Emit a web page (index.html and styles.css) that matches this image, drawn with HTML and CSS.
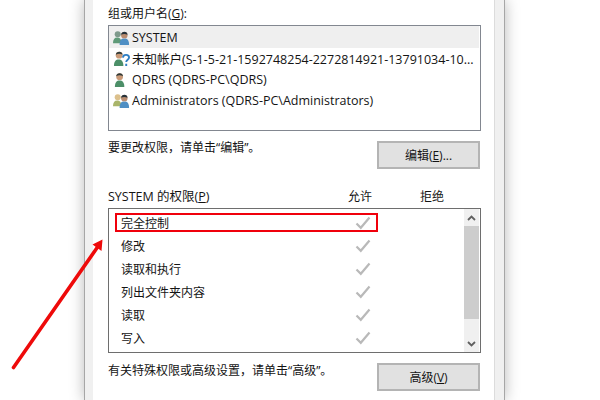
FILE: index.html
```html
<!DOCTYPE html>
<html lang="zh-CN">
<head>
<meta charset="utf-8">
<title>权限</title>
<link rel="stylesheet" href="styles.css">
</head>
<body>
<svg width="0" height="0" class="defs" aria-hidden="true">
  <symbol id="check" viewBox="0 0 16 14"><path d="M1.5 7.5 L5.8 11.8 L14.5 1.5" fill="none" stroke="#b9b9b9" stroke-width="2.2"/></symbol>
  <symbol id="one" viewBox="0 0 18 18">
    <path d="M2 17c0-5 2-7 5-7s5 2 5 7z" fill="#4c8f68"/><circle cx="7" cy="6" r="3.6" fill="#c99a78"/><path d="M3.4 5.6c0-4 7-4.600 7.200 0-2-1.200-5-1.400-7.200 0z" fill="#2f3b3a"/>
  </symbol>
  <symbol id="two" viewBox="0 0 18 18">
    <path d="M0 15c0-4 1.500-6 4.500-6s4.500 2 4.500 6z" fill="var(--back-body)"/><circle cx="5" cy="5.500" r="3.200" fill="var(--back-head)"/>
    <path d="M7 17c0-5 1.500-7 5-7s5 2 5 7z" fill="#4f8fc4"/><circle cx="12" cy="6.500" r="3.400" fill="#b98c70"/><path d="M8.600 6c0-4 6.800-4.400 6.800 0-2-1-4.800-1.200-6.800 0z" fill="#26323a"/>
  </symbol>
  <symbol id="unknown" viewBox="0 0 18 18">
    <path d="M1 17c0-5 2-7 5-7s5 2 5 7z" fill="#4c8f68"/><circle cx="6.500" cy="5.500" r="3.600" fill="#c99a78"/><path d="M3 5c0-4 7-4.600 7.200 0-2-1.200-5-1.400-7.200 0z" fill="#2f3b3a"/>
    <path d="M10.500 8c.5-4 6.500-3.500 6.500 0 0 2.500-3 2.300-3 4.700M14 14.500v2.500" fill="none" stroke="#2f7fc4" stroke-width="2"/>
  </symbol>
  <symbol id="up" viewBox="0 0 9 6"><path d="M1 5 L4.500 1.500 L8 5" fill="none" stroke="#606060" stroke-width="1.800"/></symbol>
  <symbol id="down" viewBox="0 0 9 6"><path d="M1 1 L4.500 4.500 L8 1" fill="none" stroke="#606060" stroke-width="1.800"/></symbol>
</svg>

<main class="window">
  <div class="panel">
    <div class="label first-label">组或用户名(<u>G</u>):</div>
    <ul class="users">
      <li class="user selected"><svg class="icon system"><use href="#two"/></svg><span>SYSTEM</span></li>
      <li class="user"><svg class="icon"><use href="#unknown"/></svg><span class="clip">未知帐户(S-1-5-21-1592748254-2272814921-13791034-10...</span></li>
      <li class="user"><svg class="icon"><use href="#one"/></svg><span>QDRS (QDRS-PC\QDRS)</span></li>
      <li class="user"><svg class="icon admin"><use href="#two"/></svg><span>Administrators (QDRS-PC\Administrators)</span></li>
    </ul>

    <div class="action-row edit-row">
      <span class="label">要更改权限，请单击“编辑”。</span>
      <button class="btn" type="button">编辑(<u>E</u>)...</button>
    </div>

    <div class="perm-head">
      <span class="label grow system-label">SYSTEM 的权限(<u>P</u>)</span>
      <span class="col">允许</span>
      <span class="col">拒绝</span>
      <span class="col-end"></span>
    </div>

    <div class="perms">
      <ul class="perm-rows">
        <li class="perm"><span class="name">完全控制</span><svg class="check"><use href="#check"/></svg><i class="highlight"></i></li>
        <li class="perm"><span class="name">修改</span><svg class="check"><use href="#check"/></svg></li>
        <li class="perm"><span class="name">读取和执行</span><svg class="check"><use href="#check"/></svg></li>
        <li class="perm"><span class="name">列出文件夹内容</span><svg class="check"><use href="#check"/></svg></li>
        <li class="perm"><span class="name">读取</span><svg class="check"><use href="#check"/></svg></li>
        <li class="perm"><span class="name">写入</span><svg class="check"><use href="#check"/></svg></li>
      </ul>
      <div class="scrollbar">
        <div class="sb-btn"><svg class="sb-arrow"><use href="#up"/></svg></div>
        <div class="sb-thumb"></div>
        <div class="sb-rest"></div>
        <div class="sb-btn"><svg class="sb-arrow"><use href="#down"/></svg></div>
      </div>
    </div>

    <div class="action-row adv-row">
      <span class="label">有关特殊权限或高级设置，请单击“高级”。</span>
      <button class="btn" type="button">高级(<u>V</u>)</button>
    </div>
  </div>
</main>

<svg class="arrow" viewBox="0 0 600 400" aria-hidden="true">
  <path d="M13.500 367.500 L99 245" fill="none" stroke="#ee0a0a" stroke-width="3.600" stroke-linecap="round"/>
  <path d="M102.500 239.500 L101.500 251 L92.500 244.500 Z" fill="#ee0a0a"/>
</svg>
</body>
</html>
```

FILE: styles.css
```css
* { box-sizing: border-box; }
html, body { margin: 0; padding: 0; height: 400px; overflow: hidden; background: #fff; }
body {
  font-family: "Open Sans", "Noto Sans CJK SC", sans-serif;
  font-size: 12px;
  color: #141414;
}
ul { list-style: none; margin: 0; padding: 0; }
.defs { position: absolute; }

.window {
  margin-left: 84px;
  width: 421px;
  height: 400px;
  padding: 0 9px 0 8px;
  background: #f0f0f0;
  border-left: 1px solid #a6a6a6;
  border-right: 1px solid #a6a6a6;
  box-shadow: 0 0 14px rgba(0, 0, 0, .28);
}
.panel {
  height: 400px;
  padding: 6px 13px 0 15px;
  background: #fff;
  border-right: 1px solid #dcdcdc;
}
.label { line-height: 16px; white-space: nowrap; }
.first-label { margin-bottom: 3px; }
.system-label { font-size: 12.500px; }

.users {
  height: 106px;
  border: 1px solid #828790;
}
.user {
  display: flex;
  align-items: center;
  height: 21px;
  padding-left: 4px;
  font-size: 12.500px;
  white-space: nowrap;
}
.user.selected { height: 22px; background: #efefef; margin-right: 1px; }
.icon { width: 17px; height: 17px; margin-right: 2px; flex: none; }
.system { --back-body: #5f9a78; --back-head: #7f9a8c; }
.admin { --back-body: #a9b56a; --back-head: #dcc08c; }
.clip { overflow: hidden; }

.action-row { display: flex; justify-content: space-between; align-items: flex-start; }
.edit-row { margin-top: 9px; }
.adv-row { margin-top: 10px; }
.edit-row .btn { margin-top: 1px; }
.btn {
  width: 103px;
  height: 28px;
  margin-right: 1px;
  padding: 0;
  font: inherit;
  color: inherit;
  background: #e1e1e1;
  border: 2px solid #b4b4b4;
}

.perm-head { display: flex; margin-top: 20px; line-height: 16px; }
.grow { flex: 1; }
.col { width: 72px; text-align: center; }
.col-end { width: 13px; }

.perms {
  display: flex;
  height: 145px;
  margin-top: 3px;
  border: 1px solid #6e6e6e;
}
.perm-rows { flex: 1; padding-top: 2px; }
.perm {
  position: relative;
  display: flex;
  align-items: center;
  height: 23px;
  padding-left: 12px;
}
.name { width: 234px; }
.check { width: 16px; height: 14px; }
.highlight {
  position: absolute;
  left: 6px;
  top: 2px;
  width: 263px;
  height: 19px;
  border: 2px solid #f0000c;
}

.scrollbar {
  display: flex;
  flex-direction: column;
  width: 15px;
  margin-right: 1px;
  background: #f0f0f0;
}
.sb-btn { display: flex; align-items: center; justify-content: center; height: 17px; flex: none; }
.sb-arrow { width: 9px; height: 6px; }
.sb-thumb { height: 93px; background: #cdcdcd; }
.sb-rest { flex: 1; }

.arrow { position: absolute; left: 0; top: 0; width: 600px; height: 400px; pointer-events: none; }
```
